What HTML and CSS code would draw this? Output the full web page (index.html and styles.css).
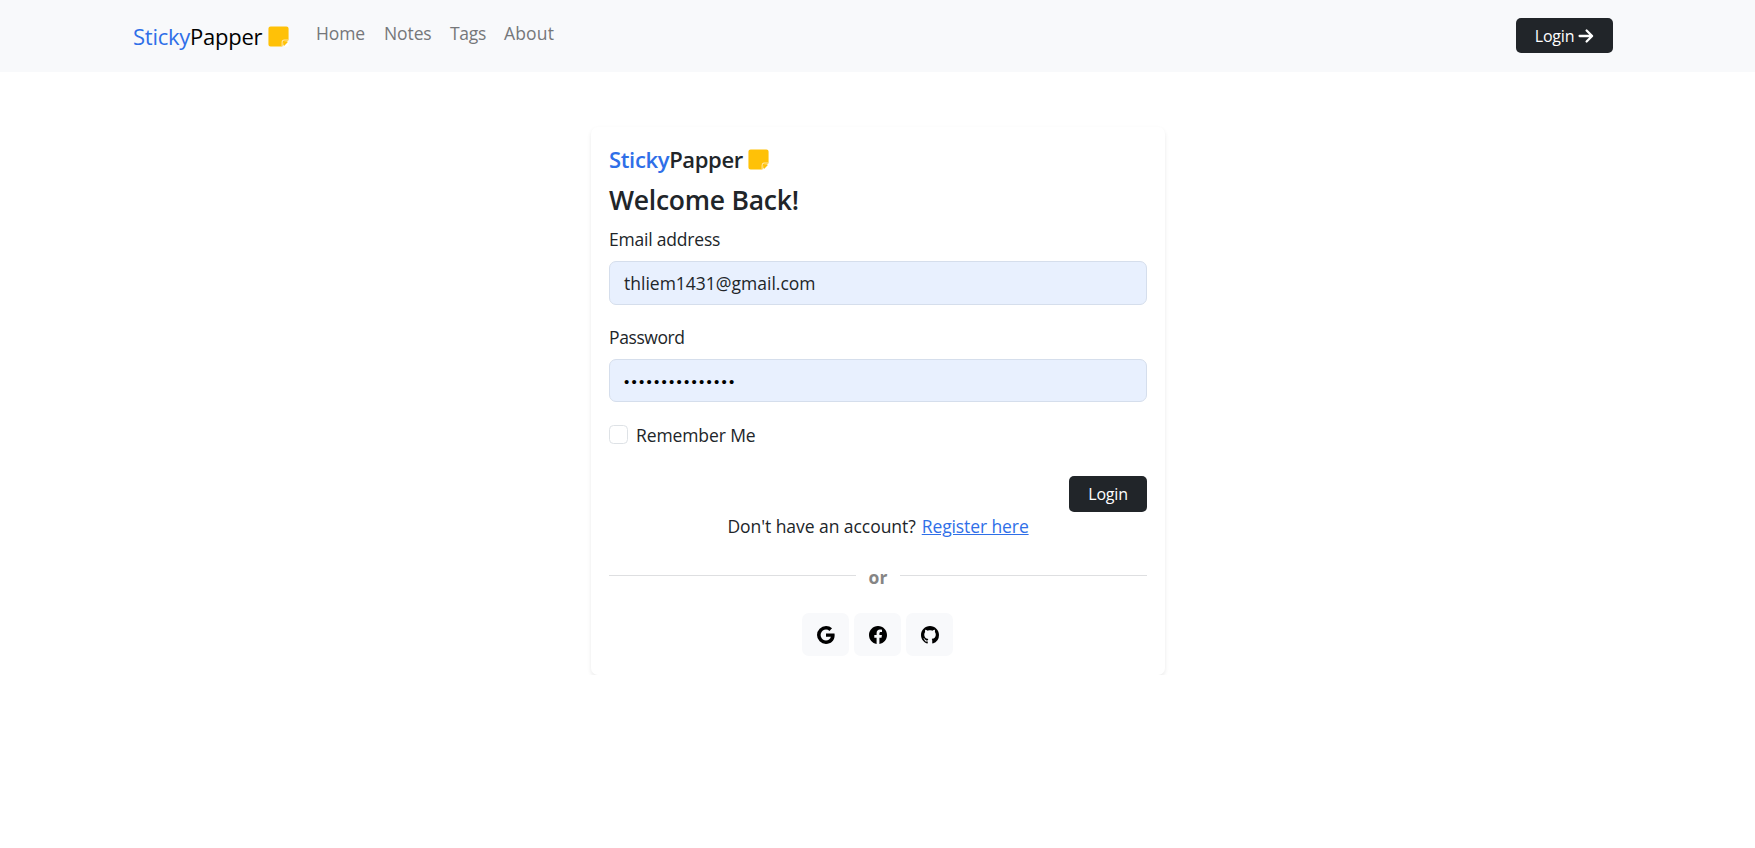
FILE: index.html
```html
<!DOCTYPE html>
<html lang="en">
<head>
<meta charset="utf-8">
<title>StickyPapper</title>
<link rel="stylesheet" href="styles.css">
</head>
<body>
<svg class="defs" aria-hidden="true">
  <symbol id="sticky" viewBox="0 0 16 16"><path d="M2.5 1A1.5 1.5 0 0 0 1 2.5v11A1.5 1.5 0 0 0 2.5 15H10.5V12.500a2 2 0 0 1 2-2H15V2.5A1.5 1.5 0 0 0 13.500 1z"/><path d="M10.5 15V12a1.500 1.500 0 0 1 1.500-1.500H15" fill="#ffc107" stroke="#ffe6a0" stroke-width=".7"/><path d="M11.700 15V12.500a.8.8 0 0 1 .8-.8H15V15z" fill="#fff"/><path d="M11.700 14.700V12.500a.8.8 0 0 1 .8-.8H14.700z"/></symbol>
</svg>
<nav class="navbar">
  <div class="nav-inner">
    <a class="brand"><span class="brand-text"><span class="blue">Sticky</span>Papper</span><svg class="note"><use href="#sticky"/></svg></a>
    <div class="links"><a class="home">Home</a><a class="notes">Notes</a><a class="tags">Tags</a><a class="about">About</a></div>
    <a class="btn btn-nav"><span>Login</span><svg class="arrow" viewBox="0 0 16 16"><path d="M1.6 8h12.2M8.6 2.5 14.1 8l-5.5 5.5"/></svg></a>
  </div>
</nav>
<main class="card">
  <div class="card-logo"><span class="card-logo-text"><span class="blue">Sticky</span>Papper</span><svg class="note"><use href="#sticky"/></svg></div>
  <h1 class="title"><span>Welcome Back!</span></h1>
  <div class="field"><div class="label email-label">Email address</div><div class="input"><span class="email-value">thliem1431@gmail.com</span></div></div>
  <div class="field"><div class="label password-label">Password</div><div class="input"><span class="dots">•••••••••••••••</span></div></div>
  <div class="remember"><span class="checkbox"></span><span class="remember-label">Remember Me</span></div>
  <div class="submit"><a class="btn">Login</a></div>
  <div class="register"><span class="question">Don't have an account?</span><a class="register-link">Register here</a></div>
  <div class="divider"><span class="or">or</span></div>
  <div class="social">
    <a class="social-btn"><svg viewBox="0 0 16 16"><path d="M15.545 6.558a9.42 9.42 0 0 1 .139 1.626c0 2.434-.87 4.492-2.384 5.885h.002C11.978 15.292 10.158 16 8 16A8 8 0 1 1 8 0a7.689 7.689 0 0 1 5.352 2.082l-2.284 2.284A4.347 4.347 0 0 0 8 3.166c-2.087 0-3.86 1.408-4.492 3.304a4.792 4.792 0 0 0 0 3.063h.003c.635 1.893 2.405 3.301 4.492 3.301 1.078 0 2.004-.276 2.722-.764h-.003a3.702 3.702 0 0 0 1.599-2.431H8v-3.08h7.545z"/></svg></a>
    <a class="social-btn"><svg viewBox="0 0 16 16"><path d="M16 8.049c0-4.446-3.582-8.05-8-8.05C3.58 0-.002 3.603-.002 8.05c0 4.017 2.926 7.347 6.75 7.951v-5.625h-2.03V8.05H6.75V6.275c0-2.017 1.195-3.131 3.022-3.131.876 0 1.791.157 1.791.157v1.98h-1.009c-.993 0-1.303.621-1.303 1.258v1.51h2.218l-.354 2.326H9.25V16c3.824-.604 6.75-3.934 6.75-7.951z"/></svg></a>
    <a class="social-btn"><svg viewBox="0 0 16 16"><path d="M8 0C3.58 0 0 3.58 0 8c0 3.54 2.29 6.53 5.47 7.59.4.07.55-.17.55-.38 0-.19-.01-.82-.01-1.49-2.01.37-2.53-.49-2.69-.94-.09-.23-.48-.94-.82-1.13-.28-.15-.68-.52-.01-.53.63-.01 1.08.58 1.23.82.72 1.21 1.87.87 2.33.66.07-.52.28-.87.51-1.07-1.78-.2-3.64-.89-3.64-3.95 0-.87.31-1.59.82-2.15-.08-.2-.36-1.02.08-2.12 0 0 .67-.21 2.2.82.64-.18 1.32-.27 2-.27.68 0 1.36.09 2 .27 1.53-1.04 2.2-.82 2.2-.82.44 1.1.16 1.92.08 2.12.51.56.82 1.27.82 2.15 0 3.07-1.87 3.75-3.65 3.95.29.25.54.73.54 1.48 0 1.07-.01 1.93-.01 2.2 0 .21.15.46.55.38A8.012 8.012 0 0 0 16 8c0-4.42-3.58-8-8-8z"/></svg></a>
  </div>
</main>
</body>
</html>
```
FILE: styles.css
```css
* { box-sizing: border-box; }
body { margin: 0; background: #fff; color: #212529; font: 400 17.5px/27px "Open Sans", "Noto Sans", sans-serif; white-space: nowrap; }
.defs { position: absolute; width: 0; height: 0; }
.blue { color: #2f6fe8; }
.navbar { height: 72px; background: #f8f9fb; }
.nav-inner { display: flex; align-items: center; height: 71px; padding: 0 142px 0 133px; }
.brand { display: flex; align-items: center; width: 183px; color: #000; }
.brand-text { width: 134px; font-size: 22px; letter-spacing: -0.25px; line-height: 34px; padding-top: 1px; }
.note { width: 23px; height: 23px; fill: #ffc107; flex: none; }
.brand .note { margin-top: 2px; }
.links { display: flex; flex: 1; color: #75777a; padding-bottom: 5px; }
.home { width: 68px; letter-spacing: -0.1px; }
.notes { width: 66px; letter-spacing: -0.1px; }
.tags { width: 54px; letter-spacing: -0.3px; }
.about { letter-spacing: 0.15px; }
.btn { display: flex; align-items: center; justify-content: center; width: 78px; height: 36px; padding-top: 1px; border-radius: 5px; background: #212529; color: #fff; font-size: 16px; letter-spacing: -0.2px; }
.btn-nav { width: 97px; height: 35px; gap: 4px; }
.arrow { width: 16px; height: 16px; fill: none; stroke: #fff; stroke-width: 2.3; stroke-linecap: round; stroke-linejoin: round; }
.card { width: 574px; height: 548px; margin: 55px 0 0 591px; padding: 17px 18px; border-radius: 7px; box-shadow: 0 2px 4.5px rgba(0,0,0,.085); }
.card-logo { display: flex; align-items: center; height: 31px; font-size: 22px; font-weight: 600; }
.card-logo-text { width: 138px; letter-spacing: -0.35px; }
.title { display: flex; align-items: center; height: 32px; margin: 9px 0 10px; font-size: 26.5px; font-weight: 600; letter-spacing: -0.25px; }
.field { margin-bottom: 19px; }
.label { height: 27px; margin-bottom: 8px; }
.email-label { letter-spacing: -0.2px; }
.password-label { letter-spacing: -0.4px; }
.input { display: flex; align-items: center; height: 43.5px; padding: 2px 14px 0; border: 1px solid #d5deec; border-radius: 7px; background: #e8f0fe; }
.dots { font: 15px/27px "Liberation Sans", sans-serif; letter-spacing: 2.25px; color: #000; }
.remember { display: flex; align-items: center; height: 27px; margin-top: 2px; }
.remember-label { letter-spacing: -0.1px; padding-top: 2px; }
.checkbox { width: 19px; height: 19px; margin-right: 8px; border: 1px solid #dee2e6; border-radius: 4.5px; }
.submit { display: flex; justify-content: flex-end; margin-top: 28px; }
.register { display: flex; justify-content: center; gap: 6px; height: 27px; margin-top: 1px; letter-spacing: -0.05px; }
.register-link { color: #2f6fe8; text-decoration: underline; letter-spacing: -0.1px; }
.divider { display: flex; align-items: center; gap: 13px; height: 27px; margin-top: 24px; color: #858585; }
.divider::before, .divider::after { content: ""; flex: 1; height: 1px; margin-bottom: 5px; background: #dedfe1; }
.or { font-weight: 700; }
.social { display: flex; justify-content: center; gap: 5px; margin: 22px 1px 0 0; }
.social-btn { display: flex; align-items: center; justify-content: center; width: 47px; height: 43px; border-radius: 7px; background: #f8f9fb; }
.social-btn svg { width: 18px; height: 18px; fill: #000; }
```
